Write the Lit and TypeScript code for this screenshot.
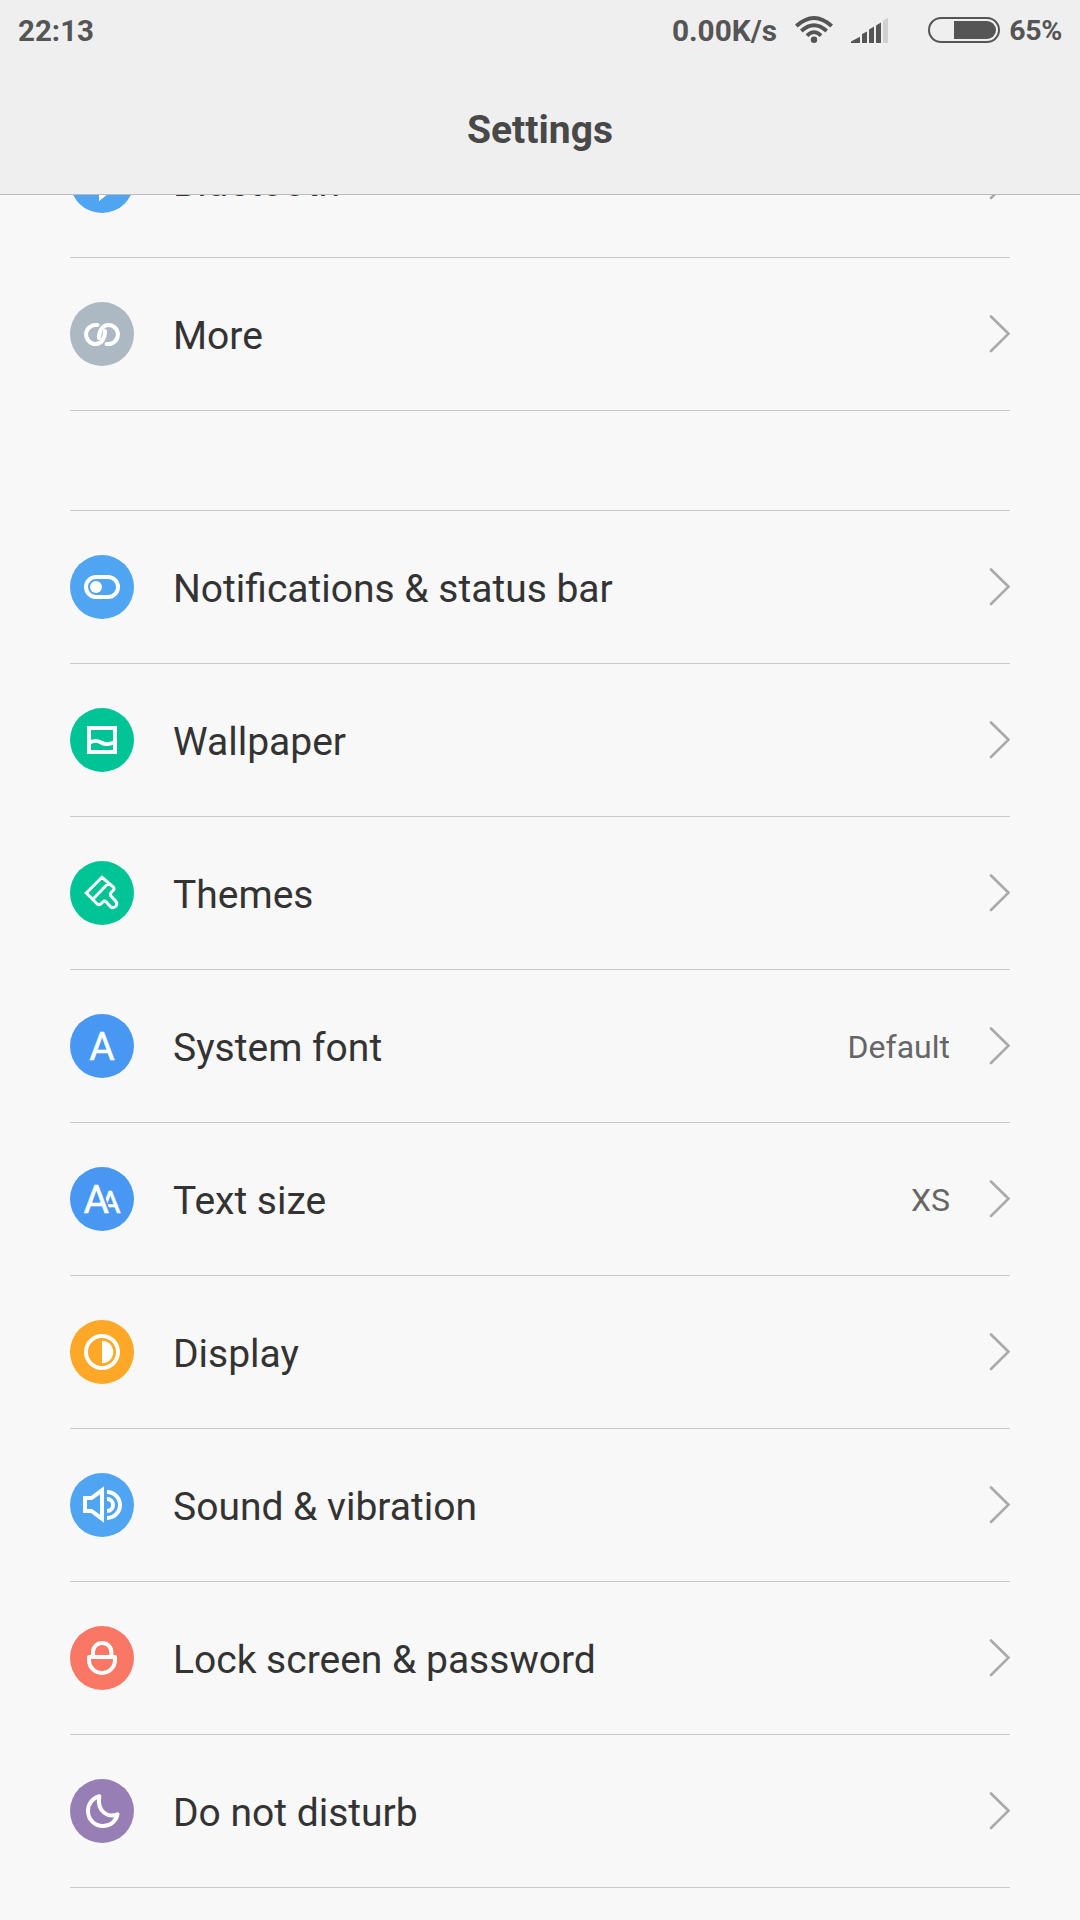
import { LitElement, html, svg, css, TemplateResult } from "lit";
import { customElement, property } from "lit/decorators.js";

type Glyph = TemplateResult;

const glyphs: Record<string, Glyph> = {
  bluetooth: svg`<path class="line" d="M22 24L41 40L31 48V16L41 24L22 40"/><path class="solid" d="M29 40H44L29 51Z"/>`,
  link: svg`<path class="line round" d="M27.500 22.900H25.700a9.600 9.600 0 0 0 0 19.200C31 42.100 35 37 35 29"/>
    <path class="line round" d="M36.500 42.100H38.300a9.600 9.600 0 0 0 0-19.200C33 22.900 29 28 29 36"/>`,
  toggle: svg`<rect class="line" x="16" y="22" width="32" height="20" rx="10"/><circle class="solid" cx="26" cy="32" r="6"/>`,
  picture: svg`<rect class="line" x="19" y="20" width="26" height="24"/><path class="line wave" d="M20 34.700C24 32 27.500 32.500 31 34.500S38.500 37 44 34.500"/>`,
  brush: svg`<path class="line thin" d="M16.300 32L32 16.300L43.300 26.200Q44.800 27.600 43.300 29.200L41 31.700Q39.600 33.400 41 34.900L46 40.500Q47.500 42.700 46 45Q43.300 47.700 40.800 46L36.300 41Q34.500 39.300 32.800 41L30.600 43Q28.800 44.400 27.200 43ZM38.500 22L22.800 38.300"/>`,
  letter: svg`<text class="char" x="32" y="46" font-size="39">A</text>`,
  letters: svg`<clipPath id="beside"><path d="M29.500 14H64V48H41.600Z"/></clipPath>
    <text class="char" x="26.200" y="46" font-size="39">A</text>
    <text class="char" x="40.200" y="46" font-size="32" clip-path="url(#beside)">A</text>`,
  contrast: svg`<circle class="line" cx="32" cy="32" r="16"/><path class="solid" d="M32 20.700a11.300 11.300 0 0 1 0 22.600Z"/>`,
  speaker: svg`<path class="line" d="M15 25H21.500L32 17.300V45.700L21.500 38H15Z"/><path class="line" d="M37 19a13 13 0 0 1 0 26M37 26a6 6 0 0 1 0 12"/>`,
  lock: svg`<path class="line join" d="M19 31H45V34a13 13 0 0 1-26 0Z"/><path class="line" d="M23 31V26.200a9.200 9.200 0 0 1 18.400 0V31"/>`,
  moon: svg`<path class="line join" d="M29.300 17.300C22 19.300 18 25.500 18 31.700C18 40.500 24.500 47 33 47C40.500 47 46 42 47.500 35.300C43 37.300 38.500 37 34.500 34C29.500 30.300 28 24.500 29.300 17.300Z"/>`,
};

interface Item {
  label: string;
  glyph: string;
  color: string;
  value?: string;
}

const connectivity: Item[] = [
  { label: "Bluetooth", glyph: "bluetooth", color: "#50a5f3" },
  { label: "More", glyph: "link", color: "#acb8c2" },
];

const personal: Item[] = [
  { label: "Notifications & status bar", glyph: "toggle", color: "#50a5f3" },
  { label: "Wallpaper", glyph: "picture", color: "#00c396" },
  { label: "Themes", glyph: "brush", color: "#00c396" },
  { label: "System font", glyph: "letter", color: "#4898f3", value: "Default" },
  { label: "Text size", glyph: "letters", color: "#4898f3", value: "XS" },
  { label: "Display", glyph: "contrast", color: "#ffa726" },
  { label: "Sound & vibration", glyph: "speaker", color: "#50a5f3" },
  { label: "Lock screen & password", glyph: "lock", color: "#fb7765" },
  { label: "Do not disturb", glyph: "moon", color: "#977eb5" },
];

@customElement("status-bar")
export class StatusBar extends LitElement {
  static styles = css`
    :host {
      display: flex;
      align-items: center;
      height: 60px;
      padding: 0 18px;
      color: #555;
      font-weight: 700;
      font-size: 29.5px;
      line-height: 60px;
    }
    .time {
      flex: 1;
      padding-top: 2px;
    }
    .speed {
      margin-right: 17px;
      padding-top: 2px;
      font-size: 29.8px;
    }
    .percent {
      font-size: 28.5px;
      letter-spacing: -0.3px;
      padding-top: 1px;
    }
    .icon {
      display: block;
      fill: #555;
    }
    .stroke {
      fill: none;
      stroke: #555;
    }
    .wifi {
      margin-right: 17px;
    }
    .signal {
      margin-right: 40px;
    }
    .battery {
      margin-right: 9px;
    }
    .empty {
      fill: #d0d0d0;
    }
  `;

  render() {
    return html`
      <span class="time">22:13</span>
      <span class="speed">0.00K/s</span>
      <svg class="icon wifi" width="40" height="60" viewBox="0 0 40 60">
        <circle cx="20" cy="39.800" r="3.200" />
        <path class="stroke" stroke-width="3.800" d="M2.300 26Q20 9.800 37.700 26M7.300 31Q20 19.300 32.700 31M13 35.700Q20 28.700 27 35.700" />
      </svg>
      <svg class="icon signal" width="37" height="60" viewBox="0 0 37 60">
        <path d="M0 43V41.500L9 36.700V43ZM11 43V34L16 31.500V43ZM18 43V29.500L23 26.500V43ZM25 43V25.500L30 22.500V43Z" />
        <path class="empty" d="M32 43V20.500L37 18V43Z" />
      </svg>
      <svg class="icon battery" width="72" height="60" viewBox="0 0 72 60">
        <rect class="stroke" stroke-width="2" x="1" y="18" width="70" height="24" rx="12" />
        <path d="M26 21H59a9 9 0 0 1 0 18H26Z" />
      </svg>
      <span class="percent">65%</span>
    `;
  }
}

@customElement("setting-row")
export class SettingRow extends LitElement {
  @property({ attribute: false }) item!: Item;

  static styles = css`
    :host {
      display: flex;
      align-items: center;
      box-sizing: border-box;
      height: 153px;
      border-bottom: 1px solid #c9c9c9;
    }
    .badge {
      width: 64px;
      height: 64px;
      flex: none;
      margin-right: 39px;
    }
    .line {
      fill: none;
      stroke: #fff;
      stroke-width: 4;
    }
    .round {
      stroke-linecap: round;
    }
    .join {
      stroke-linejoin: round;
    }
    .thin {
      stroke-width: 3;
    }
    .wave {
      stroke-width: 3.8;
    }
    .solid {
      fill: #fff;
    }
    .char {
      fill: #fff;
      stroke: #fff;
      stroke-width: 0.5;
      font-family: Roboto, sans-serif;
      text-anchor: middle;
    }
    .label {
      flex: 1;
      color: #333;
      font-size: 39px;
      line-height: 48px;
      padding-top: 3px;
    }
    .value {
      color: #666;
      font-size: 32px;
      line-height: 40px;
      padding-top: 2px;
      margin-right: 38px;
    }
    .chevron {
      flex: none;
      fill: none;
      stroke: #aaa;
      stroke-width: 2.6;
      stroke-linecap: round;
    }
  `;

  render() {
    const { label, glyph, color, value } = this.item;
    return html`
      <svg class="badge" viewBox="0 0 64 64">
        <circle cx="32" cy="32" r="32" fill=${color} />
        ${glyphs[glyph]}
      </svg>
      <span class="label">${label}</span>
      ${value ? html`<span class="value">${value}</span>` : null}
      <svg class="chevron" width="22" height="40" viewBox="0 0 22 40">
        <path d="M3 2.500L20.500 19.700L3 37" />
      </svg>
    `;
  }
}

@customElement("app-root")
export class AppRoot extends LitElement {
  static styles = css`
    :host {
      display: flex;
      flex-direction: column;
      height: 1920px;
      overflow: hidden;
      background: #f8f8f8;
      font-family: Roboto, sans-serif;
    }
    .header {
      flex: none;
      box-sizing: border-box;
      height: 195px;
      background: #efefef;
      border-bottom: 1px solid #bcbcbc;
    }
    .title {
      margin: 0;
      padding-top: 8px;
      text-align: center;
      color: #484848;
      font-size: 39px;
      line-height: 124px;
      font-weight: 700;
    }
    .viewport {
      flex: 1;
      min-height: 0;
      overflow: hidden;
    }
    .list {
      margin-top: -90px;
      padding: 0 70px;
    }
    .group + .group {
      margin-top: 99px;
      border-top: 1px solid #c9c9c9;
    }
  `;

  private group(items: Item[]) {
    return html`<section class="group">
      ${items.map((item) => html`<setting-row .item=${item}></setting-row>`)}
    </section>`;
  }

  render() {
    return html`
      <header class="header">
        <status-bar></status-bar>
        <h1 class="title">Settings</h1>
      </header>
      <main class="viewport">
        <div class="list">${this.group(connectivity)}${this.group(personal)}</div>
      </main>
    `;
  }
}
